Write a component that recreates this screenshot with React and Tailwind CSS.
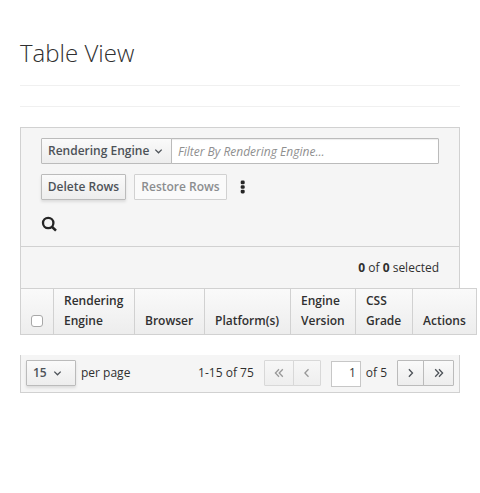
const BTN =
  "flex h-[26px] shrink-0 items-center border border-[#bbb] bg-linear-to-b from-[#fafafa] to-[#ededed] text-[12px] leading-5 font-semibold text-[#4d5258]";

function Chevron({ dir = "down", double = false, className = "" }) {
  const single = {
    down: "M1.3 3.6 L4.5 6.8 L7.7 3.6",
    left: "M6.5 1.2 L2.9 5 L6.5 8.8",
    right: "M2.9 1.2 L6.5 5 L2.9 8.8",
  };
  const twin = {
    left: "M5 1.2 L1.4 5 L5 8.8 M8.8 1.2 L5.2 5 L8.8 8.8",
    right: "M1.2 1.2 L4.8 5 L1.2 8.8 M5 1.2 L8.6 5 L5 8.8",
  };
  return (
    <svg width="10" height="10" viewBox="0 0 10 10" fill="none" stroke="currentColor" strokeWidth="1.3" className={className}>
      <path d={double ? twin[dir] : single[dir]} />
    </svg>
  );
}

function Filter() {
  return (
    <div className="flex w-[398px]">
      <button className={`${BTN} w-[131px] rounded-l-[1px] pl-[6px]`}>
        Rendering Engine
        <Chevron className="ml-[5px]" />
      </button>
      <input
        className="-ml-px h-[26px] min-w-0 flex-1 rounded-r-[1px] border border-[#bbb] bg-white px-[6px] text-[12px] text-[#363636] italic shadow-[inset_0_1px_1px_rgba(3,3,3,0.075)] placeholder:text-[#8f8f8f] placeholder:opacity-100"
        placeholder="Filter By Rendering Engine..."
      />
    </div>
  );
}

function Toolbar() {
  return (
    <div className="border border-[#d1d1d1] bg-[#f5f5f5]">
      <div className="flex h-[118px] flex-col items-start pt-[10px] pl-[20px]">
        <Filter />
        <div className="mt-[10px] flex items-center">
          <button className={`${BTN} w-[85px] justify-center rounded-[1px] shadow-[0_2px_3px_rgba(3,3,3,0.1)]`}>Delete Rows</button>
          <button className="ml-[8px] flex h-[26px] w-[93px] items-center justify-center rounded-[1px] border border-[#d1d1d1] bg-[#fafafa] text-[12px] leading-5 font-semibold text-[#8b8d8f]">
            Restore Rows
          </button>
          <svg className="ml-[13px]" width="6" height="14" viewBox="0 0 6 14" fill="#252525">
            <rect x="0.7" y="0.6" width="4" height="3.6" rx="1.3" />
            <rect x="0.7" y="5.2" width="4" height="3.6" rx="1.3" />
            <rect x="0.7" y="9.8" width="4" height="3.6" rx="1.3" />
          </svg>
        </div>
        <svg className="mt-[16px]" width="16" height="16" viewBox="0 0 16 16" fill="none" stroke="#252525">
          <circle cx="7.2" cy="7" r="5.2" strokeWidth="2.3" />
          <path d="M10.9 10.7 L15 14.6" strokeWidth="2.6" />
        </svg>
      </div>
      <div className="flex h-[42px] items-center justify-end border-t border-[#d1d1d1] pr-[20px] text-[12px] leading-5">
        <span>
          <b>0</b> of <b>0</b> selected
        </span>
      </div>
    </div>
  );
}

const COLUMNS = [
  ["Rendering Engine", "w-[81px]"],
  ["Browser", "w-[70px]"],
  ["Platform(s)", "w-[86px]"],
  ["Engine Version", "w-[65px]"],
  ["CSS Grade", "w-[57px]"],
  ["Actions", "w-[65px]"],
];

function HeaderRow() {
  return (
    <div className="-mt-px flex h-[47px] w-[457px] border-y border-[#d1d1d1] bg-linear-to-b from-[#fafafa] to-[#ededed]">
      <div className="flex w-[33px] shrink-0 items-end border-l border-[#d1d1d1] pb-[7px] pl-[10px]">
        <input type="checkbox" className="size-[12px] appearance-none rounded-[3px] border border-[#a8a8a8] bg-white" />
      </div>
      {COLUMNS.map(([name, width]) => (
        <div
          key={name}
          className={`${width} flex shrink-0 items-end border-l border-[#d1d1d1] pr-[8px] pb-[3px] pl-[10px] text-[12px] leading-5 font-semibold last:border-r`}
        >
          {name}
        </div>
      ))}
    </div>
  );
}

function Pager() {
  return (
    <div className="mt-[20px] flex h-[38px] items-start border-x border-b border-[#d1d1d1] bg-[#f5f5f5] pt-[5px] pl-[5px] text-[12px] leading-[26px]">
      <button className={`${BTN} w-[50px] rounded-[1px] pl-[6px] shadow-[0_2px_3px_rgba(3,3,3,0.1)]`}>
        15
        <Chevron className="ml-[6px]" />
      </button>
      <span className="ml-[5px]">per page</span>
      <div className="ml-auto flex pr-[5px]">
        <span className="mr-[10px]">1-15 of 75</span>
        <button className="flex h-[26px] w-[30px] items-center justify-center rounded-l-[1px] border border-[#d8d8d8] bg-linear-to-b from-[#f7f7f7] to-[#eee] text-[#999]">
          <Chevron dir="left" double />
        </button>
        <button className="-ml-px flex h-[26px] w-[28px] items-center justify-center rounded-r-[1px] border border-[#d8d8d8] bg-linear-to-b from-[#f7f7f7] to-[#eee] text-[#999]">
          <Chevron dir="left" />
        </button>
        <input
          className="mt-px ml-[10px] h-[26px] w-[30px] border border-[#c7c7c7] bg-white pr-[4px] pb-[2px] text-right text-[12px] text-[#363636]"
          defaultValue="1"
        />
        <span className="ml-[5px]">of 5</span>
        <button className={`${BTN} ml-[10px] w-[27px] justify-center rounded-l-[1px]`}>
          <Chevron dir="right" />
        </button>
        <button className={`${BTN} -ml-px w-[31px] justify-center rounded-r-[1px]`}>
          <Chevron dir="right" double />
        </button>
      </div>
    </div>
  );
}

export default function App() {
  return (
    <div className="h-[493px] w-[480px] overflow-hidden bg-white pl-[20px] font-['Open_Sans',sans-serif] text-[12px] text-[#303030]">
      <main className="w-[440px] pt-[40px]">
        <h1 className="text-[24px] leading-[26px] font-light">Table View</h1>
        <hr className="mt-[19px] border-[#f0f0f0]" />
        <hr className="mt-[20px] mb-[20px] border-[#f0f0f0]" />
        <Toolbar />
        <HeaderRow />
        <Pager />
      </main>
    </div>
  );
}
